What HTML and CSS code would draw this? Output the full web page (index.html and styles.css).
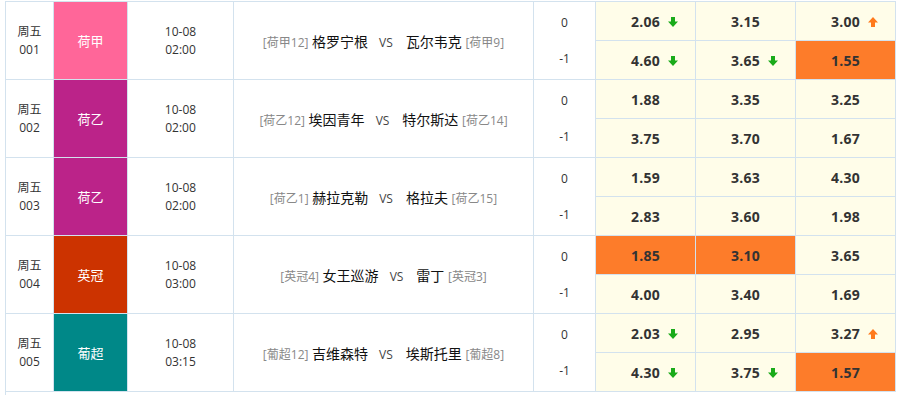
FILE: index.html
```html
<!DOCTYPE html>
<html lang="zh-CN">
<head>
<meta charset="utf-8">
<title>赛程</title>
<link rel="stylesheet" href="styles.css">
</head>
<body>
<svg width="0" height="0" class="defs" aria-hidden="true">
  <defs>
    <symbol id="down" viewBox="0 0 10 10"><path d="M3 0h4v4.5h3L5 10 0 4.5h3z"/></symbol>
    <symbol id="up" viewBox="0 0 10 10"><path d="M5 0l5 5.5H7V10H3V5.5H0z"/></symbol>
  </defs>
</svg>
<table class="match-table">
  <colgroup>
    <col class="c-no"><col class="c-league"><col class="c-time"><col class="c-match"><col class="c-hcp"><col class="c-odd"><col class="c-odd"><col class="c-odd">
  </colgroup>
  <tbody>
    <tr>
      <td rowspan="2" class="no">周五<br>001</td>
      <td rowspan="2" class="league lg-hj">荷甲</td>
      <td rowspan="2" class="time">10-08<br>02:00</td>
      <td rowspan="2" class="match"><span class="rank">[荷甲12]</span> 格罗宁根<span class="vs">VS</span>瓦尔韦克 <span class="rank">[荷甲9]</span></td>
      <td class="hcp top">0</td>
      <td class="odd"><span class="num">2.06<svg class="arr dn"><use href="#down"/></svg></span></td>
      <td class="odd"><span class="num">3.15</span></td>
      <td class="odd"><span class="num">3.00<svg class="arr up"><use href="#up"/></svg></span></td>
    </tr>
    <tr>
      <td class="hcp bot">-1</td>
      <td class="odd"><span class="num">4.60<svg class="arr dn"><use href="#down"/></svg></span></td>
      <td class="odd"><span class="num">3.65<svg class="arr dn"><use href="#down"/></svg></span></td>
      <td class="odd hot"><span class="num">1.55</span></td>
    </tr>
    <tr>
      <td rowspan="2" class="no">周五<br>002</td>
      <td rowspan="2" class="league lg-hy">荷乙</td>
      <td rowspan="2" class="time">10-08<br>02:00</td>
      <td rowspan="2" class="match"><span class="rank">[荷乙12]</span> 埃因青年<span class="vs">VS</span>特尔斯达 <span class="rank">[荷乙14]</span></td>
      <td class="hcp top">0</td>
      <td class="odd"><span class="num">1.88</span></td>
      <td class="odd"><span class="num">3.35</span></td>
      <td class="odd"><span class="num">3.25</span></td>
    </tr>
    <tr>
      <td class="hcp bot">-1</td>
      <td class="odd"><span class="num">3.75</span></td>
      <td class="odd"><span class="num">3.70</span></td>
      <td class="odd"><span class="num">1.67</span></td>
    </tr>
    <tr>
      <td rowspan="2" class="no">周五<br>003</td>
      <td rowspan="2" class="league lg-hy">荷乙</td>
      <td rowspan="2" class="time">10-08<br>02:00</td>
      <td rowspan="2" class="match"><span class="rank">[荷乙1]</span> 赫拉克勒<span class="vs">VS</span>格拉夫 <span class="rank">[荷乙15]</span></td>
      <td class="hcp top">0</td>
      <td class="odd"><span class="num">1.59</span></td>
      <td class="odd"><span class="num">3.63</span></td>
      <td class="odd"><span class="num">4.30</span></td>
    </tr>
    <tr>
      <td class="hcp bot">-1</td>
      <td class="odd"><span class="num">2.83</span></td>
      <td class="odd"><span class="num">3.60</span></td>
      <td class="odd"><span class="num">1.98</span></td>
    </tr>
    <tr>
      <td rowspan="2" class="no">周五<br>004</td>
      <td rowspan="2" class="league lg-yg">英冠</td>
      <td rowspan="2" class="time">10-08<br>03:00</td>
      <td rowspan="2" class="match"><span class="rank">[英冠4]</span> 女王巡游<span class="vs">VS</span>雷丁 <span class="rank">[英冠3]</span></td>
      <td class="hcp top">0</td>
      <td class="odd hot"><span class="num">1.85</span></td>
      <td class="odd hot"><span class="num">3.10</span></td>
      <td class="odd"><span class="num">3.65</span></td>
    </tr>
    <tr>
      <td class="hcp bot">-1</td>
      <td class="odd"><span class="num">4.00</span></td>
      <td class="odd"><span class="num">3.40</span></td>
      <td class="odd"><span class="num">1.69</span></td>
    </tr>
    <tr>
      <td rowspan="2" class="no">周五<br>005</td>
      <td rowspan="2" class="league lg-pc">葡超</td>
      <td rowspan="2" class="time">10-08<br>03:15</td>
      <td rowspan="2" class="match"><span class="rank">[葡超12]</span> 吉维森特<span class="vs">VS</span>埃斯托里 <span class="rank">[葡超8]</span></td>
      <td class="hcp top">0</td>
      <td class="odd"><span class="num">2.03<svg class="arr dn"><use href="#down"/></svg></span></td>
      <td class="odd"><span class="num">2.95</span></td>
      <td class="odd"><span class="num">3.27<svg class="arr up"><use href="#up"/></svg></span></td>
    </tr>
    <tr>
      <td class="hcp bot">-1</td>
      <td class="odd"><span class="num">4.30<svg class="arr dn"><use href="#down"/></svg></span></td>
      <td class="odd"><span class="num">3.75<svg class="arr dn"><use href="#down"/></svg></span></td>
      <td class="odd hot"><span class="num">1.57</span></td>
    </tr>
    <tr class="more">
      <td colspan="8"></td>
    </tr>
  </tbody>
</table>
</body>
</html>
```

FILE: styles.css
```css
html, body {
  margin: 0;
  padding: 0;
  background: #fff;
}
body {
  padding: 1px 0 0 5px;
  font-family: "Open Sans", "Noto Sans CJK SC", sans-serif;
  font-size: 12px;
  color: #333;
}
.defs {
  position: absolute;
  width: 0;
  height: 0;
}
.match-table {
  border-collapse: collapse;
  table-layout: fixed;
  width: 890px;
}
.c-no { width: 48px; }
.c-league { width: 74px; }
.c-time { width: 106px; }
.c-match { width: 300px; }
.c-hcp { width: 62px; }
.c-odd { width: 100px; }
.match-table td {
  border: 1px solid #d3e2ee;
  padding: 0;
  text-align: center;
  vertical-align: middle;
}
.match-table tr {
  height: 39px;
}
.no, .time {
  line-height: 18px;
  color: #333;
}
.league {
  color: #fff;
  font-size: 13px;
}
.lg-hj { background: #ff6699; }
.lg-hy { background: #bb2389; }
.lg-yg { background: #cc3300; }
.lg-pc { background: #008888; }
.match {
  font-size: 14px;
  color: #111;
}
.rank {
  color: #888;
  font-size: 12px;
}
.vs {
  color: #444;
  font-size: 12px;
  margin: 0 13px 0 11px;
}
.hcp {
  color: #333;
}
.hcp.top {
  border-bottom: none;
  padding-top: 2px;
}
.hcp.bot {
  border-top: none;
  padding-bottom: 2px;
}
.odd {
  background: #fffde9;
  font-weight: 700;
  font-size: 14px;
  color: #333;
  letter-spacing: 0.3px;
}
.odd.hot {
  background: #fd7c2a;
}
.num {
  position: relative;
  display: inline-block;
}
.arr {
  position: absolute;
  left: 100%;
  top: 50%;
  margin: -4px 0 0 8px;
  width: 10px;
  height: 10px;
}
.arr.dn { fill: #1aab1a; }
.arr.up { fill: #ff7a1c; }
.more td {
  height: 30px;
  border-bottom: none;
  border-right: none;
}
```
